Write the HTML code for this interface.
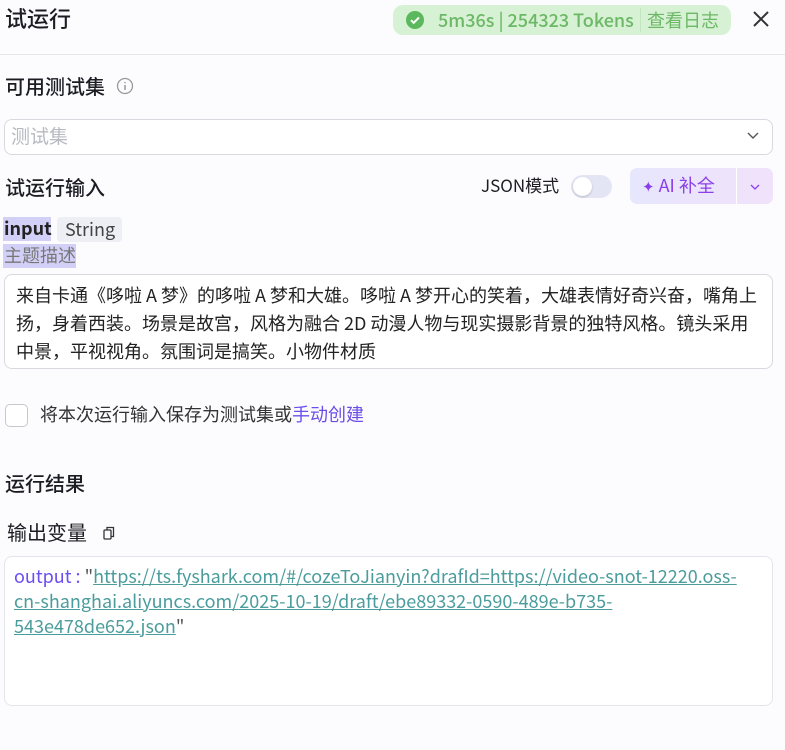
<!DOCTYPE html>
<html><head><meta charset="utf-8"><style>
*{box-sizing:border-box;margin:0;padding:0}
body{width:785px;height:750px;background:#fcfcff;font-family:"Noto Sans CJK SC","Liberation Sans",sans-serif;color:#1c1d23;position:relative;overflow:hidden}
.a{position:absolute;white-space:nowrap;line-height:1.3}
</style></head><body>
<div class="a" style="left:5px;top:4px;font-size:22px;font-weight:500">试运行</div>
<div class="a" style="left:393px;top:5px;width:338px;height:30px;border-radius:10px;background:#d6f1d3;color:#6cb866;font-size:18px;line-height:30px">
  <svg style="position:absolute;left:13px;top:6px" width="18" height="18" viewBox="0 0 18 18"><circle cx="9" cy="9" r="9" fill="#5cb85c"/><path d="M5 9.2l2.7 2.6L13 6.5" stroke="#fff" stroke-width="2" fill="none"/></svg>
  <span style="position:absolute;left:45px;font-size:18px;font-weight:500">5m36s | 254323 Tokens</span>
  <span style="position:absolute;left:247px;top:3px;width:1px;height:24px;background:#c2e6be"></span>
  <span style="position:absolute;left:254px">查看日志</span>
</div>
<svg class="a" style="left:752px;top:10px" width="18" height="18" viewBox="0 0 18 18"><path d="M2 2L16 16M16 2L2 16" stroke="#333" stroke-width="2"/></svg>
<div class="a" style="left:0;top:54px;width:785px;height:1px;background:#e6e6ec"></div>
<div class="a" style="left:5px;top:73px;font-size:20px;font-weight:500">可用测试集</div>
<svg class="a" style="left:116px;top:77px" width="18" height="18" viewBox="0 0 18 18"><circle cx="9" cy="9" r="7.5" stroke="#999" stroke-width="1.3" fill="none"/><path d="M9 8v5M9 5v1.2" stroke="#999" stroke-width="1.5"/></svg>
<div class="a" style="left:4px;top:119px;width:769px;height:36px;border:1px solid #d8d9e0;border-radius:8px;background:#fff"></div>
<div class="a" style="left:11px;top:124px;font-size:19px;color:#b8b9c2">测试集</div>
<svg class="a" style="left:746px;top:131px" width="14" height="10" viewBox="0 0 14 10"><path d="M2 2l5 5 5-5" stroke="#555" stroke-width="1.4" fill="none"/></svg>
<div class="a" style="left:5px;top:174px;font-size:20px;font-weight:500">试运行输入</div>
<div class="a" style="left:481px;top:174px;font-size:17px">JSON模式</div>
<div class="a" style="left:571px;top:175px;width:41px;height:23px;border-radius:12px;background:#e3e5f5"></div>
<div class="a" style="left:573px;top:177px;width:19px;height:19px;border-radius:50%;background:#fff;box-shadow:0 1px 2px rgba(0,0,0,.2)"></div>
<div class="a" style="left:630px;top:168px;width:143px;height:36px;border-radius:7px;background:linear-gradient(90deg,#e6e6fc,#f1e2fb)"></div>
<div class="a" style="left:736px;top:168px;width:1px;height:36px;background:#fff"></div>
<div class="a" style="left:642px;top:174px;font-size:18px;color:#8b3fe8"><span style="font-size:15px">✦</span> AI 补全</div>
<svg class="a" style="left:749px;top:183px" width="12" height="8" viewBox="0 0 12 8"><path d="M2 2l4 4 4-4" stroke="#8b3fe8" stroke-width="1.3" fill="none"/></svg>
<div class="a" style="left:3px;top:217px;width:48px;height:24px;background:#d2d0f7"></div>
<div class="a" style="left:4px;top:217px;font-size:18px;font-weight:700;color:#222">input</div>
<div class="a" style="left:57px;top:217px;width:65px;height:25px;border-radius:4px;background:#eeeff5;font-size:18px;line-height:25px;padding-left:8px;color:#444">String</div>
<div class="a" style="left:3px;top:244px;width:73px;height:24px;background:#d2d0f7"></div>
<div class="a" style="left:4px;top:244px;font-size:18px;color:#777">主题描述</div>
<div class="a" style="left:4px;top:274px;width:769px;height:95px;border:1px solid #d8d9e0;border-radius:8px;background:#fff"></div>
<div class="a" style="left:16px;top:281px;font-size:18px;line-height:28px;color:#222">来自卡通《哆啦 A 梦》的哆啦 A 梦和大雄。哆啦 A 梦开心的笑着，大雄表情好奇兴奋，嘴角上<br>扬，身着西装。场景是故宫，风格为融合 2D 动漫人物与现实摄影背景的独特风格。镜头采用<br>中景，平视视角。氛围词是搞笑。小物件材质</div>
<div class="a" style="left:5px;top:404px;width:23px;height:23px;border:1.5px solid #c6c7d0;border-radius:5px;background:#fff"></div>
<div class="a" style="left:40px;top:403px;font-size:18px;color:#333">将本次运行输入保存为测试集或<span style="color:#6b4ee8">手动创建</span></div>
<div class="a" style="left:5px;top:470px;font-size:20px;font-weight:500">运行结果</div>
<div class="a" style="left:7px;top:519px;font-size:20px">输出变量</div>
<svg class="a" style="left:101px;top:525px" width="16" height="16" viewBox="0 0 16 16"><rect x="3" y="5" width="7" height="9" rx="1" stroke="#333" stroke-width="1.3" fill="none"/><path d="M6 5V2.5h6.5v9H10" stroke="#333" stroke-width="1.3" fill="none"/></svg>
<div class="a" style="left:4px;top:556px;width:769px;height:150px;border:1px solid #e4e5ec;border-radius:8px;background:#fff"></div>
<div class="a" style="left:14px;top:564px;font-size:18px;line-height:25px;color:#4b9c9c"><span style="color:#6b4ef0">output : </span><span style="color:#555">"</span><u>https://ts.fyshark.com/#/cozeToJianyin?drafId=https://video-snot-12220.oss-</u><br><u>cn-shanghai.aliyuncs.com/2025-10-19/draft/ebe89332-0590-489e-b735-</u><br><u>543e478de652.json</u><span style="color:#555">"</span></div>
</body></html>
